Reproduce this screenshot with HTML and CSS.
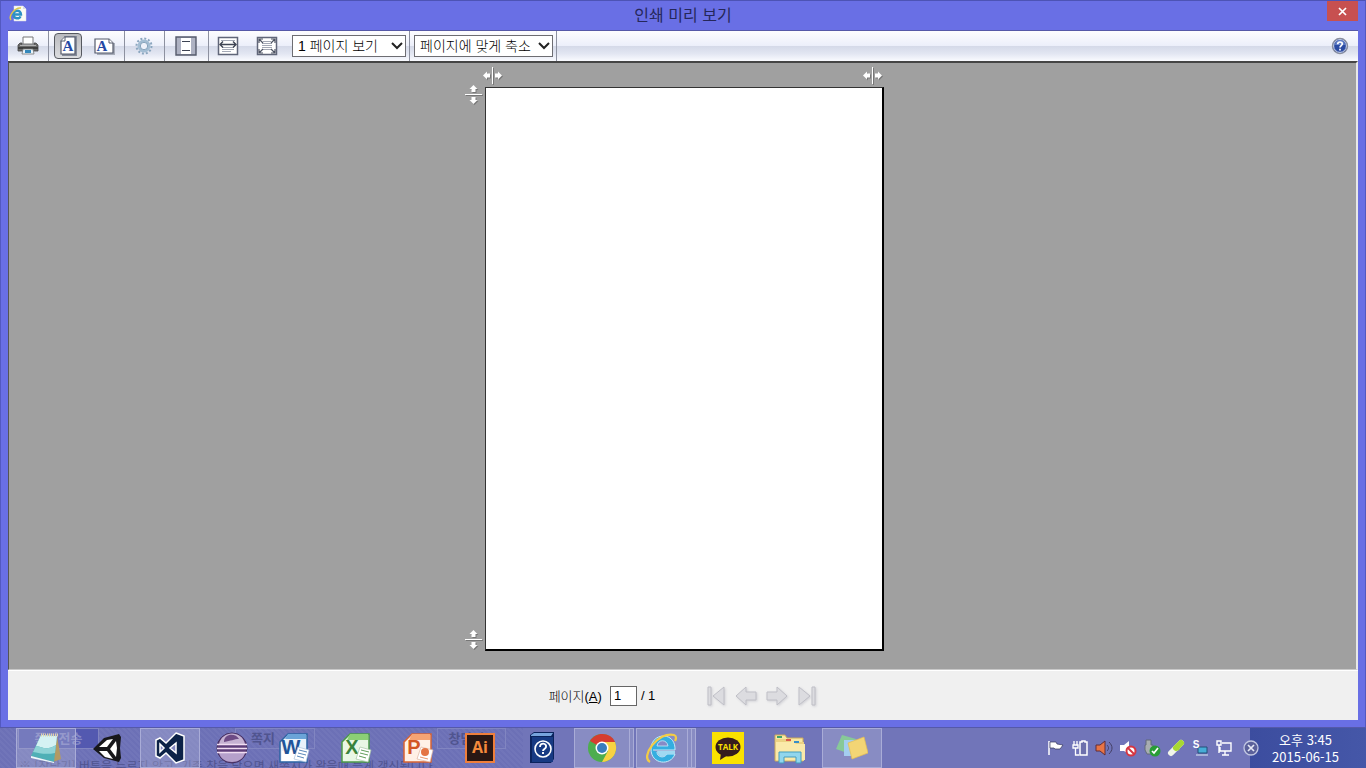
FILE: index.html
```html
<!DOCTYPE html>
<html lang="ko">
<head>
    <meta charset="UTF-8">
    <meta name="viewport" content="width=device-width, initial-scale=1.0">
    <title>인쇄 미리 보기</title>
    <link rel="stylesheet" href="styles.css">
</head>
<body>

<div class="window">
    <header class="titlebar">
        <svg class="app-icon" width="18" height="18" viewBox="0 0 18 18">
            <path d="M5 1h9l3 3v12H5z" fill="#fbfbf4" stroke="#d8d8e8" stroke-width=".5"/>
            <path d="M14 1v3h3" fill="#d5d9e6"/>
            <path d="M4.500 9.500h7.500c0-5-7.500-5-7.500 0s6 4.500 7 1.800" fill="none" stroke="#2c91c4" stroke-width="2.400"/>
            <path d="M2 15C-1 11 6 2 12 3" fill="none" stroke="#d9c64b" stroke-width="1.500"/>
        </svg>
        <h1 class="title">인쇄 미리 보기</h1>
        <button type="button" class="close-button" aria-label="닫기">
            <svg width="9" height="9" viewBox="0 0 9 9"><path d="M1 1l7 7M8 1L1 8" stroke="#fff" stroke-width="1.700"/></svg>
        </button>
    </header>

    <div class="toolbar">
        <div class="tool-group">
            <button type="button" class="tool" aria-label="인쇄">
                <svg width="22" height="22" viewBox="0 0 22 22">
                    <path d="M6 2h10v7H6z" fill="#fff" stroke="#777" stroke-width="1"/>
                    <path d="M3 8h2v2h12V8h2l2 2v6H1v-6z" fill="#6b6b6b" stroke="#484848" stroke-width=".8"/>
                    <path d="M1 12h20v2H1z" fill="#404040"/>
                    <path d="M3 10.500h16" stroke="#b3b3b3"/>
                    <path d="M6 14h10l1 5H5z" fill="#e8f3fa" stroke="#777" stroke-width=".8"/>
                    <path d="M8 15h6v3H8z" fill="#3588bb"/>
                </svg>
            </button>
        </div>
        <div class="tool-group">
            <button type="button" class="tool tool-active" aria-label="세로">
                <svg width="22" height="22" viewBox="0 0 22 22">
                    <path d="M7 2h12v18H5" fill="none" stroke="#858b98" stroke-width="2"/>
                    <path d="M8 2h10v17H4V6z" fill="#fff" stroke="#555b6c" stroke-width="1.200"/>
                    <path d="M8 2v4H4" fill="#fff" stroke="#555b6c"/>
                    <text x="11" y="16" class="letter">A</text>
                </svg>
            </button>
            <button type="button" class="tool" aria-label="가로">
                <svg width="22" height="22" viewBox="0 0 22 22">
                    <path d="M4 19h17V8" fill="none" stroke="#a7acb8" stroke-width="2"/>
                    <path d="M2 4h14l4 4v10H2z" fill="#fff" stroke="#555b6c" stroke-width="1.200"/>
                    <path d="M16 4v4h4" fill="#fff" stroke="#555b6c"/>
                    <text x="9" y="16" class="letter">A</text>
                </svg>
            </button>
        </div>
        <div class="tool-group">
            <button type="button" class="tool" aria-label="페이지 설정">
                <svg width="20" height="20" viewBox="0 0 20 20">
                    <circle cx="10" cy="10" r="7.500" fill="none" stroke="#8ba6bf" stroke-width="2" stroke-dasharray="2 1.930"/>
                    <circle cx="10" cy="10" r="5" fill="#e9edf6" stroke="#a3bdd3" stroke-width="3"/>
                    <circle cx="10" cy="10" r="3.700" fill="#eef1fa" stroke="#6f90ad" stroke-width=".8"/>
                </svg>
            </button>
        </div>
        <div class="tool-group">
            <button type="button" class="tool tool-wide" aria-label="머리글 및 바닥글">
                <svg width="22" height="20" viewBox="0 0 22 20">
                    <path d="M1 1h20v18H1z" fill="#aeb2c3" stroke="#565b6c" stroke-width="1.400"/>
                    <path d="M6 2h10v16H6z" fill="#fff"/>
                    <path d="M7 5.500h8M7 14.500h8" stroke="#3d4353"/>
                </svg>
            </button>
        </div>
        <div class="tool-group tool-group-view">
            <button type="button" class="tool" aria-label="너비에 맞춤">
                <svg width="22" height="20" viewBox="0 0 22 20">
                    <path d="M1.500 1.500h19v17h-19z" fill="#fff" stroke="#606679" stroke-width="1.500"/>
                    <path d="M4 4.500h14M5 11.500h12M5 13.500h12M5 15.500h9" stroke="#a4a9b6"/>
                    <path d="M3 8.500h16M6 5.500l-3 3 3 3M16 5.500l3 3-3 3" fill="none" stroke="#3f4554" stroke-width="1.400"/>
                </svg>
            </button>
            <button type="button" class="tool" aria-label="전체 페이지">
                <svg width="22" height="20" viewBox="0 0 22 20">
                    <path d="M1.500 1.500h19v17h-19z" fill="#fff" stroke="#606679" stroke-width="1.500"/>
                    <path d="M7 5.500h8M6 7.500h10M6 9.500h10M6 11.500h10M7 13.500h8" stroke="#a4a9b6"/>
                    <path d="M3 7V3h4M3 3l4 4M15 3h4v4M19 3l-4 4M3 13v4h4M3 17l4-4M19 13v4h-4M19 17l-4-4" fill="none" stroke="#4d5363" stroke-width="1.200"/>
                </svg>
            </button>
            <div class="dropdown">
                <select class="select select-view" aria-label="페이지 보기">
                    <option>1 페이지 보기</option>
                </select>
                <svg class="arrow" width="12" height="8" viewBox="0 0 12 8"><path d="M1 1l5 5 5-5" fill="none" stroke="#222" stroke-width="2"/></svg>
            </div>
        </div>
        <div class="tool-group tool-group-scale">
            <div class="dropdown">
                <select class="select" aria-label="인쇄 크기">
                    <option>페이지에 맞게 축소</option>
                </select>
                <svg class="arrow" width="12" height="8" viewBox="0 0 12 8"><path d="M1 1l5 5 5-5" fill="none" stroke="#222" stroke-width="2"/></svg>
            </div>
        </div>
        <button type="button" class="tool help-button" aria-label="도움말">
            <svg width="18" height="18" viewBox="0 0 18 18">
                <circle cx="9" cy="9" r="7.600" fill="#2b4ba3" stroke="#8b8f9c" stroke-width="1.200"/>
                <circle cx="9" cy="9" r="6.400" fill="none" stroke="#d5dbea"/>
                <path d="M4 8a5 5 0 0 1 10 0z" fill="#5f7dc7"/>
                <path d="M6.700 7.200c0-3 4.800-2.800 4.600-.2C11.200 8.600 9 8.600 9 10.600M9 11.800v1.800" fill="none" stroke="#fff" stroke-width="1.700"/>
            </svg>
        </button>
    </div>

    <main class="preview">
        <div class="side-margins">
            <button type="button" class="handle" aria-label="위쪽 여백">
                <svg width="17" height="19" viewBox="0 0 17 19"><path d="M0 9.500h17" stroke="#fff"/><path d="M8.500 0l4 4h-2v3h-4V4h-2zM8.500 19l4-4h-2v-3h-4v3h-2z" fill="#fff"/></svg>
            </button>
            <button type="button" class="handle" aria-label="아래쪽 여백">
                <svg width="17" height="19" viewBox="0 0 17 19"><path d="M0 9.500h17" stroke="#fff"/><path d="M8.500 0l4 4h-2v3h-4V4h-2zM8.500 19l4-4h-2v-3h-4v3h-2z" fill="#fff"/></svg>
            </button>
        </div>
        <div class="sheet-column">
            <div class="top-margins">
                <button type="button" class="handle" aria-label="왼쪽 여백">
                    <svg width="19" height="17" viewBox="0 0 19 17"><path d="M9.500 0v17" stroke="#fff"/><path d="M0 8.500l4-4v2h3v4H4v2zM19 8.500l-4-4v2h-3v4h3v2z" fill="#fff"/></svg>
                </button>
                <button type="button" class="handle" aria-label="오른쪽 여백">
                    <svg width="19" height="17" viewBox="0 0 19 17"><path d="M9.500 0v17" stroke="#fff"/><path d="M0 8.500l4-4v2h3v4H4v2zM19 8.500l-4-4v2h-3v4h3v2z" fill="#fff"/></svg>
                </button>
            </div>
            <div class="sheet"></div>
        </div>
    </main>

    <footer class="pager">
        <label for="pageNumber">페이지(<u>A</u>)</label>
        <input type="text" id="pageNumber" class="page-number" value="1">
        <span>/ 1</span>
        <div class="page-nav">
            <button type="button" class="nav-button" aria-label="첫 페이지" disabled>
                <svg width="20" height="20" viewBox="0 0 20 20"><path d="M2 1h3v18H2zM18 1v18L7 10z"/></svg>
            </button>
            <button type="button" class="nav-button" aria-label="이전 페이지" disabled>
                <svg width="22" height="20" viewBox="0 0 22 20"><path d="M1 10l10-9v5h10v8H11v5z"/></svg>
            </button>
            <button type="button" class="nav-button" aria-label="다음 페이지" disabled>
                <svg width="22" height="20" viewBox="0 0 22 20"><path d="M21 10L11 1v5H1v8h10v5z"/></svg>
            </button>
            <button type="button" class="nav-button" aria-label="마지막 페이지" disabled>
                <svg width="20" height="20" viewBox="0 0 20 20"><path d="M15 1h3v18h-3zM2 1v18l11-9z"/></svg>
            </button>
        </div>
    </footer>
</div>

<div class="taskbar">
    <!-- page showing through the translucent bar -->
    <div class="behind" aria-hidden="true">
        <span class="ghost ghost-send">쪽지전송</span>
        <span class="ghost ghost-memo">쪽지</span>
        <span class="ghost ghost-close">창닫기</span>
        <span class="ghost-note">※ [창닫기] 버튼을 누르지 않고, 기존 창을 닫으면 새쪽지가 왔을때 늦게 갱신됩니다.</span>
    </div>

    <nav class="apps">
        <button type="button" class="app app-open" aria-label="메모장">
            <svg width="32" height="32" viewBox="0 0 32 32">
                <path d="M27 4l4 23-8 3z" fill="#b39a63"/>
                <path d="M11 3l16 1-3 26-23-6z" fill="#4fb0b6"/>
                <path d="M11 3l16 1-1 9C17 19 12 15 6 14z" fill="#d5f2f3"/>
                <path d="M6 14c6 1 11 5 20-1l-1 8C16 23 9 21 3 20z" fill="#8fd3d6"/>
                <path d="M1 24l23 6v1L1 26z" fill="#eefafa"/>
                <path d="M11 3h17" stroke="#e2d3ac" stroke-width="3" stroke-dasharray="1 1"/>
            </svg>
        </button>
        <button type="button" class="app" aria-label="Unity">
            <svg width="32" height="32" viewBox="0 0 32 32">
                <path d="M1 17L12 6l15-4 2 3-1 11 1 10-2 4-15-4z" fill="#17171b"/>
                <path d="M7 15l8-7 6-1-6 8zM7 19h8l6 8-8-2zM24 9l1 7-1 9-6-8z" fill="#fff"/>
            </svg>
        </button>
        <button type="button" class="app app-open" aria-label="Visual Studio">
            <svg width="34" height="32" viewBox="0 0 34 32">
                <path d="M23 1l8 3v24l-8 3-10-10-6 5-4-2V8l4-2 6 5zM23 11l-6 5 6 5zM7 12v8l4-4z" fill="#0c2247" fill-rule="evenodd" stroke="#fff" stroke-width="1.500"/>
            </svg>
        </button>
        <button type="button" class="app" aria-label="Eclipse">
            <svg width="32" height="32" viewBox="0 0 32 32">
                <circle cx="16" cy="16" r="15" fill="#5d3d78" stroke="#453060"/>
                <path d="M3 12C6-2 26-2 29 12z" fill="#c5b2d2"/>
                <path d="M3 21c3 12 23 12 26 0z" fill="#b5a0cb"/>
                <path d="M1 12.500h30M1 16.500h30M1 20.500h30" stroke="#f0ddf1" stroke-width="1.500"/>
                <path d="M8 10c0-9 12-9 15-3-5 0-8 2-15 3z" fill="#6d4b85"/>
            </svg>
        </button>
        <button type="button" class="app" aria-label="Word">
            <svg width="32" height="32" viewBox="0 0 32 32">
                <path d="M10 2h19v28H2V10z" fill="#e9f2fa" stroke="#2d64a4" stroke-width="1.500"/>
                <path d="M10 2h18v5H7z" fill="#6ba4d8"/>
                <path d="M4 19l21-2v12H4z" fill="#fff"/>
                <text x="13" y="22" class="office word">W</text>
                <path d="M20 15l11 3-3 12-12-3z" fill="#fff" stroke="#aac2dc" stroke-width=".7"/>
                <path d="M21 18l8 2M20 21l8 2M19 24l7 2" stroke="#5b88b9"/>
            </svg>
        </button>
        <button type="button" class="app" aria-label="Excel">
            <svg width="32" height="32" viewBox="0 0 32 32">
                <path d="M10 2h19v28H2V10z" fill="#e9f7e5" stroke="#4b9b48" stroke-width="1.500"/>
                <path d="M10 2h18v6H7z" fill="#8bd075"/>
                <text x="12" y="22" class="office excel">X</text>
                <path d="M20 15l11 3-3 12-12-3z" fill="#fff" stroke="#a5c4a3" stroke-width=".7"/>
                <path d="M21 18l8 2M20 21l8 2M19 24l7 2" stroke="#629e5b"/>
            </svg>
        </button>
        <button type="button" class="app" aria-label="PowerPoint">
            <svg width="32" height="32" viewBox="0 0 32 32">
                <path d="M10 2h19v28H2V10z" fill="#fff1e6" stroke="#d76333" stroke-width="1.500"/>
                <path d="M10 2h18v6H7z" fill="#f6a473"/>
                <text x="12" y="22" class="office powerpoint">P</text>
                <path d="M19 15l12 3-3 12-13-3z" fill="#fff" stroke="#dfb6a1" stroke-width=".7"/>
                <circle cx="23" cy="20" r="4" fill="#e47645"/>
                <path d="M18 25l8 2" stroke="#e8996f"/>
            </svg>
        </button>
        <button type="button" class="app" aria-label="Illustrator">
            <svg width="30" height="30" viewBox="0 0 30 30">
                <path d="M1 1h28v28H1z" fill="#291714" stroke="#ef7f3c" stroke-width="2"/>
                <text x="15" y="20" class="ai">Ai</text>
            </svg>
        </button>
        <button type="button" class="app" aria-label="도움말 뷰어">
            <svg width="26" height="32" viewBox="0 0 26 32">
                <path d="M1 3l4-3h20v27l-3 4H1z" fill="#0b235d"/>
                <path d="M2 3l3-2h19l-2 3H2z" fill="#77a4dd"/>
                <path d="M3 5h21v25H3z" fill="#173a83"/>
                <circle cx="14" cy="17" r="8" fill="none" stroke="#fff" stroke-width="1.600"/>
                <path d="M11 15c0-5 7-4 6 0-.5 2-3 2-3 4M14 20v2" fill="none" stroke="#fff" stroke-width="1.900"/>
            </svg>
        </button>
        <button type="button" class="app app-stack" aria-label="Chrome">
            <span class="stack-face">
                <svg width="32" height="32" viewBox="0 0 32 32">
                    <circle cx="16" cy="16" r="14" fill="#4dad4e"/>
                    <path d="M16 16L4 9C10-1 25 0 29 10z" fill="#d63c30"/>
                    <path d="M16 10h13c4 10-3 20-13 20l6-11z" fill="#f7d243"/>
                    <circle cx="16" cy="16" r="6.500" fill="#fff"/>
                    <circle cx="16" cy="16" r="5" fill="#387dbd"/>
                </svg>
            </span>
            <span class="stack-edge"></span>
        </button>
        <button type="button" class="app app-stack" aria-label="Internet Explorer">
            <span class="stack-face">
                <svg width="32" height="32" viewBox="0 0 32 32">
                    <path d="M7 18h22c1-19-24-18-24-1 0 16 20 17 24 5h-8c-3 5-10 3-10-2" fill="#35aee0" stroke="#c4ecfa"/>
                    <path d="M11 14c1-7 10-7 11 0z" fill="#868ac6" stroke="#c4ecfa" stroke-width=".8"/>
                    <path d="M11 19h18v3h-8c-3 5-9 3-10-3z" fill="#9fd9f2"/>
                    <path d="M4 30C-6 25 12-1 28 3c3 1 2 4 1 6" fill="none" stroke="#f3cc45" stroke-width="2.300"/>
                </svg>
            </span>
            <span class="stack-edge"></span>
            <span class="stack-edge"></span>
        </button>
        <button type="button" class="app" aria-label="카카오톡">
            <svg width="32" height="32" viewBox="0 0 32 32">
                <path d="M0 0h32v32H0z" fill="#fae100"/>
                <ellipse cx="16" cy="15" rx="12.500" ry="9.500" fill="#371c1d"/>
                <path d="M9 21l-1 7 8-5z" fill="#371c1d"/>
                <text x="16" y="18" class="talk">TALK</text>
            </svg>
        </button>
        <button type="button" class="app" aria-label="파일 탐색기">
            <svg width="34" height="32" viewBox="0 0 34 32">
                <path d="M2 3h10l2 3h16v23H2z" fill="#f8e7a3" stroke="#cba95b"/>
                <path d="M3 7h13l2 3h13v19H3z" fill="#ecd283"/>
                <path d="M3 10h18l2 2h9v16H3z" fill="#fae9aa"/>
                <path d="M4 4h5v2H4z" fill="#3ca36d"/>
                <path d="M13 7h5v2h-5z" fill="#d9574d"/>
                <path d="M21 9h5v2h-5z" fill="#398ec8"/>
                <path d="M6 31V20h22v11h-5v-6H11v6z" fill="#91d6ee" stroke="#459dbf"/>
            </svg>
        </button>
        <button type="button" class="app app-open" aria-label="스티커 메모">
            <svg width="32" height="32" viewBox="0 0 32 32">
                <path d="M6 3l14 4-6 15L0 17z" fill="#87c998"/>
                <path d="M8 8h14v16H8z" fill="#a4cef0"/>
                <path d="M12 11l16-6 4 16-16 6z" fill="#f3d575" stroke="#e5bd4f" stroke-width=".7"/>
            </svg>
        </button>
    </nav>

    <div class="tray">
        <svg width="18" height="18" viewBox="0 0 18 18"><path d="M2 2v14" stroke="#fff" stroke-width="1.500"/><path d="M3 3h6l1 2 6 1-3 4H8L7 9H3z" fill="#fff" stroke="#33375a" stroke-width=".7"/></svg>
        <svg width="18" height="18" viewBox="0 0 18 18"><path d="M3 2v4M6 2v4M2 6h5v3H2zM4.500 9v7H8" fill="none" stroke="#fff" stroke-width="1.300"/><path d="M9 3h2V2h3v1h2v13H9z" fill="#6d70ac" stroke="#fff" stroke-width="1.500"/></svg>
        <svg width="18" height="18" viewBox="0 0 18 18"><path d="M1 6h4l5-4v14l-5-4H1z" fill="#e87446" stroke="#622d36"/><path d="M12 6c2 2 2 4 0 6M14 3c4 4 4 8 0 12" fill="none" stroke="#443f65"/></svg>
        <svg width="18" height="18" viewBox="0 0 18 18"><path d="M1 6h4l5-4v13l-5-3H1z" fill="#fff"/><circle cx="12" cy="12" r="4.500" fill="#fff" stroke="#d63642" stroke-width="2"/><path d="M9 9l6 6" stroke="#d63642" stroke-width="2"/></svg>
        <svg width="18" height="18" viewBox="0 0 18 18"><path d="M3 1h5v5h2v9H4l-2-4V6h1z" fill="#a8adb1" stroke="#626a79"/><circle cx="12" cy="12" r="5.500" fill="#289d36"/><path d="M9 12l2 2 4-5" fill="none" stroke="#fff" stroke-width="1.700"/></svg>
        <svg width="18" height="18" viewBox="0 0 18 18"><path d="M4 14L14 4" stroke="#f1f5e9" stroke-width="6" stroke-linecap="round"/><path d="M9 9l5-5" stroke="#a8d832" stroke-width="6" stroke-linecap="round"/><path d="M8 7l4 4z" stroke="#a8d832" stroke-width="2"/></svg>
        <svg width="18" height="18" viewBox="0 0 18 18"><path d="M7 8h9v6H7z" fill="#47acd6" stroke="#244f79"/><path d="M5 16h12" stroke="#dcecf6"/><text x="5" y="9" class="tray-letter">S</text></svg>
        <svg width="18" height="18" viewBox="0 0 18 18"><path d="M7 4h9v8H5V8M10 12v4M7 16h7M2 2h4v4H2zM4 6v8" fill="none" stroke="#fff" stroke-width="1.400"/></svg>
    </div>
    <svg class="tray-dismiss" width="18" height="18" viewBox="0 0 18 18"><circle cx="9" cy="9" r="7" fill="#5b619b" stroke="#c3c8e2" stroke-width="1.300"/><path d="M6 6l6 6M12 6l-6 6" stroke="#e7e9f5" stroke-width="1.700"/></svg>
    <div class="clock">
        <span>오후 3:45</span>
        <span>2015-06-15</span>
    </div>
</div>

</body>
</html>
```
FILE: styles.css
```css
* {
    box-sizing: border-box;
}

body {
    display: flex;
    flex-direction: column;
    height: 100vh;
    margin: 0;
    overflow: hidden;
    background: #696fe5;
    font-family: "Liberation Sans", "Noto Sans CJK KR", sans-serif;
    font-size: 13px;
    color: #000;
}

button {
    display: flex;
    align-items: center;
    justify-content: center;
    padding: 0;
    border: none;
    background: none;
}

svg {
    display: block;
    flex: none;
}

/* Window */
.window {
    display: flex;
    flex: 1;
    flex-direction: column;
    min-height: 0;
    padding: 0 7px 7px;
    border-top: 1px solid #4d53b5;
    border-left: 1px solid #5359c0;
    border-right: 1px solid #5359c0;
    background: #696fe5;
}

.titlebar {
    display: flex;
    flex: none;
    align-items: center;
    justify-content: space-between;
    height: 30px;
    padding-bottom: 3px;
    border-bottom: 1px solid #5659a8;
}

.app-icon {
    margin: 0 12px 0 1px;
}

.title {
    margin: 0;
    font-size: 16px;
    font-weight: 400;
    font-family: "Noto Sans CJK KR", sans-serif;
    line-height: 24px;
    color: #25275a;
}

.close-button {
    align-self: flex-start;
    width: 31px;
    height: 20px;
    background: #c75050;
}

/* Toolbar */
.toolbar {
    display: flex;
    flex: none;
    height: 30px;
    padding-left: 1px;
    background: linear-gradient(#fdfdff 0%, #eceffa 49%, #d4d9e8 50%, #e2e6f2 75%, #fafbff 100%);
}

.tool-group {
    display: flex;
    align-items: center;
    gap: 8px;
    padding: 0 6px 0 5px;
    border-right: 1px solid #8d91a0;
}

.tool-group-view {
    gap: 11px;
    padding-right: 3px;
}

.tool-group-scale {
    padding: 0 3px 0 4px;
}

.tool {
    width: 28px;
    height: 26px;
}

.tool-wide {
    width: 32px;
}

.tool-active {
    border: 1px solid #55585f;
    border-radius: 4px;
    background: linear-gradient(#b9babe, #dcdde0);
}

.help-button {
    align-self: center;
    margin-left: auto;
    margin-right: 4px;
}

.letter {
    font: bold 15px "Liberation Serif", serif;
    fill: #2549a5;
    text-anchor: middle;
}

.dropdown {
    position: relative;
}

.select {
    display: block;
    height: 22px;
    padding: 0 21px 0 5px;
    border: 1px solid #6d6d72;
    border-radius: 0;
    background: #fff;
    font-family: "Liberation Sans", "Noto Sans CJK KR", sans-serif;
    font-size: 14px;
    font-weight: 300;
    color: #000;
    appearance: none;
}

.select-view {
    padding-right: 27px;
}

.arrow {
    position: absolute;
    top: 7px;
    right: 3px;
    pointer-events: none;
}

/* Preview */
.preview {
    display: flex;
    flex: 1;
    justify-content: center;
    min-height: 0;
    padding: 4px 17px 0 0;
    border-top: 2px solid #454545;
    border-left: 1px solid #555;
    border-right: 2px solid #e8e8e8;
    border-bottom: 1px solid #c8c8c8;
    background: #a0a0a0;
}

.side-margins {
    display: flex;
    flex-direction: column;
    justify-content: space-between;
    height: calc(100vh - 202px);
    margin-top: 18px;
    padding: 0 3px 2px 0;
}

.top-margins {
    display: flex;
    justify-content: space-between;
    height: 20px;
    margin-left: -2px;
    padding: 0 2px 3px 0;
}

.handle {
    filter: drop-shadow(1px 1px 0 #777);
}

.sheet {
    height: calc(100vh - 204px);
    aspect-ratio: 399 / 564;
    border: 1px solid #333;
    border-right: 2px solid #000;
    border-bottom: 2px solid #000;
    background: #fff;
}

/* Pager */
.pager {
    display: flex;
    flex: none;
    align-items: center;
    justify-content: center;
    height: 50px;
    border-top: 1px solid #fff;
    background: #f0f0f0;
    font-weight: 300;
}

.page-number {
    width: 27px;
    height: 20px;
    margin: 0 4px 0 8px;
    padding: 0 3px;
    border: 1px solid #666;
    background: #fff;
    font-family: inherit;
    font-size: 13px;
}

.page-nav {
    display: flex;
    gap: 9px;
    margin-left: 51px;
}

.nav-button path {
    fill: #dcdce0;
    stroke: #bfbfc6;
}

.nav-button {
    filter: drop-shadow(1px 1px 1px #d0d0d5);
}

/* Taskbar */
.taskbar {
    position: relative;
    display: flex;
    flex: none;
    height: 41px;
    padding-left: 16px;
    border-top: 1px solid #5559a9;
    background: #7175b9;
    overflow: hidden;
}

.behind {
    position: absolute;
    inset: 0;
    background: repeating-linear-gradient(45deg, #6c70b6 0, #6c70b6 2px, #7175b9 2px, #7175b9 4px);
    background-size: 523px 100%;
    background-repeat: no-repeat;
    font-family: "Noto Sans CJK KR", sans-serif;
    color: #50548f;
}

.ghost {
    position: absolute;
    top: 0;
    height: 21px;
    border: 1px solid #8185c1;
    line-height: 18px;
    text-align: center;
    font-weight: 700;
}

.ghost-send {
    left: 18px;
    width: 81px;
    background: #5359b0;
    color: #8589c6;
}

.ghost-memo {
    left: 235px;
    width: 80px;
    padding-right: 24px;
}

.ghost-close {
    left: 437px;
    width: 69px;
    padding-right: 10px;
}

.ghost-note {
    position: absolute;
    top: 28px;
    left: 19px;
    font-size: 12px;
    line-height: 20px;
    white-space: nowrap;
}

.apps {
    position: relative;
    display: flex;
    gap: 2px;
}

.app {
    width: 60px;
    height: 40px;
}

.app-open,
.stack-face,
.stack-edge {
    border: 1px solid #a9acd7;
    background: rgba(180, 182, 216, 0.35);
}

.app-stack {
    align-items: stretch;
    justify-content: flex-start;
}

.stack-face {
    display: flex;
    flex: 1;
    align-items: center;
    justify-content: center;
}

.stack-edge {
    width: 4px;
    border-left: none;
}

.office {
    font: bold 20px "Liberation Sans", sans-serif;
    text-anchor: middle;
}

.word {
    fill: #205498;
}

.excel {
    fill: #39833c;
}

.powerpoint {
    fill: #d35625;
}

.ai {
    font: bold 16px "Open Sans", sans-serif;
    fill: #f58a3c;
    text-anchor: middle;
}

.talk {
    font: bold 8px "Open Sans", sans-serif;
    fill: #fae100;
    text-anchor: middle;
}

.tray {
    position: relative;
    display: flex;
    align-items: center;
    gap: 6px;
    margin-left: auto;
    padding-right: 9px;
}

.tray-letter {
    font: bold 10px "Liberation Sans", sans-serif;
    fill: #fff;
    text-anchor: middle;
}

.tray-dismiss {
    position: relative;
    z-index: 1;
    align-self: center;
    margin-right: -10px;
}

.clock {
    position: relative;
    display: flex;
    flex-direction: column;
    align-items: center;
    justify-content: center;
    width: 116px;
    padding-right: 5px;
    background: linear-gradient(90deg, #3c4d9f, #4557a8);
    font-family: "Noto Sans CJK KR", sans-serif;
    line-height: 17px;
    color: #fff;
}
```
